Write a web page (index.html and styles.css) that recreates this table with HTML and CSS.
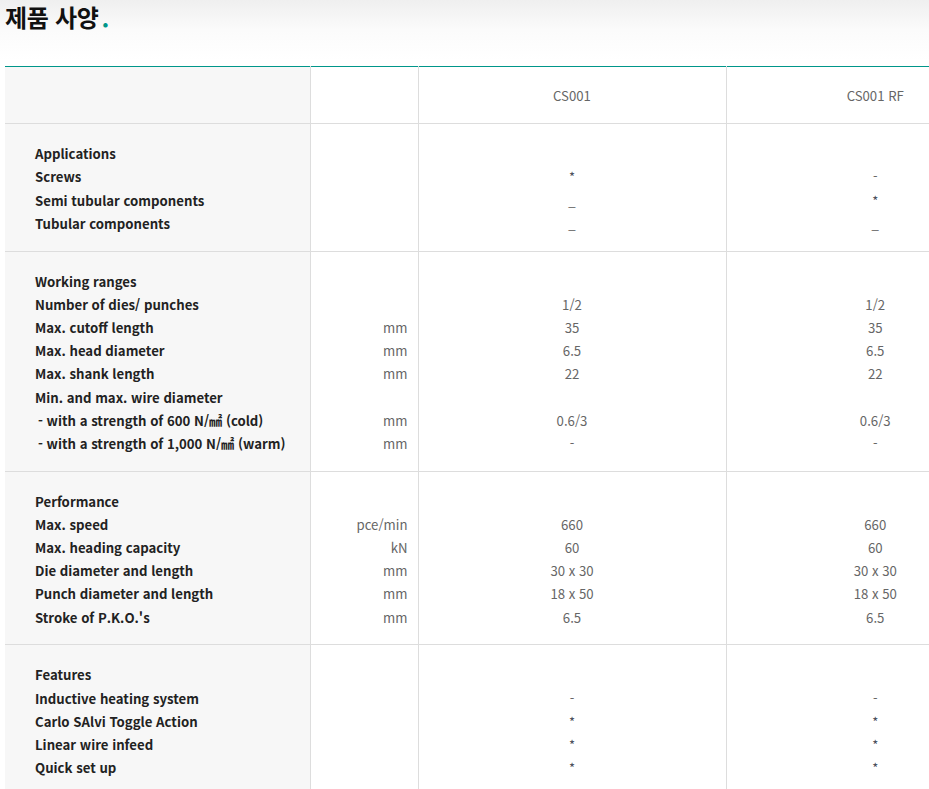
FILE: index.html
```html
<!DOCTYPE html>
<html lang="ko">
<head>
<meta charset="utf-8">
<title>제품 사양</title>
<link rel="stylesheet" href="styles.css">
</head>
<body>
<div class="page">
  <div class="title-bar">
    <h2 class="title">제품 사양<span class="dot">.</span></h2>
  </div>
  <div class="table-wrap">
    <table class="spec">
      <colgroup>
        <col class="c-label">
        <col class="c-unit">
        <col class="c-val">
        <col class="c-val2">
      </colgroup>
      <thead>
        <tr>
          <th class="label"></th>
          <th class="unit"></th>
          <th class="val">CS001</th>
          <th class="val">CS001 RF</th>
        </tr>
      </thead>
      <tbody>
        <tr>
          <td class="label">
            <div>Applications</div>
            <div>Screws</div>
            <div>Semi tubular components</div>
            <div>Tubular components</div>
          </td>
          <td class="unit">
            <div>&nbsp;</div><div>&nbsp;</div><div>&nbsp;</div><div>&nbsp;</div>
          </td>
          <td class="val">
            <div>&nbsp;</div>
            <div class="star">*</div>
            <div>_</div>
            <div>_</div>
          </td>
          <td class="val">
            <div>&nbsp;</div>
            <div>-</div>
            <div class="star">*</div>
            <div>_</div>
          </td>
        </tr>
        <tr>
          <td class="label">
            <div>Working ranges</div>
            <div>Number of dies/ punches</div>
            <div>Max. cutoff length</div>
            <div>Max. head diameter</div>
            <div>Max. shank length</div>
            <div>Min. and max. wire diameter</div>
            <div class="sub">- with a strength of 600 N/㎟ (cold)</div>
            <div class="sub">- with a strength of 1,000 N/㎟ (warm)</div>
          </td>
          <td class="unit">
            <div>&nbsp;</div>
            <div>&nbsp;</div>
            <div>mm</div>
            <div>mm</div>
            <div>mm</div>
            <div>&nbsp;</div>
            <div>mm</div>
            <div>mm</div>
          </td>
          <td class="val">
            <div>&nbsp;</div>
            <div>1/2</div>
            <div>35</div>
            <div>6.5</div>
            <div>22</div>
            <div>&nbsp;</div>
            <div>0.6/3</div>
            <div>-</div>
          </td>
          <td class="val">
            <div>&nbsp;</div>
            <div>1/2</div>
            <div>35</div>
            <div>6.5</div>
            <div>22</div>
            <div>&nbsp;</div>
            <div>0.6/3</div>
            <div>-</div>
          </td>
        </tr>
        <tr>
          <td class="label">
            <div>Performance</div>
            <div>Max. speed</div>
            <div>Max. heading capacity</div>
            <div>Die diameter and length</div>
            <div>Punch diameter and length</div>
            <div>Stroke of P.K.O.'s</div>
          </td>
          <td class="unit">
            <div>&nbsp;</div>
            <div>pce/min</div>
            <div>kN</div>
            <div>mm</div>
            <div>mm</div>
            <div>mm</div>
          </td>
          <td class="val">
            <div>&nbsp;</div>
            <div>660</div>
            <div>60</div>
            <div>30 x 30</div>
            <div>18 x 50</div>
            <div>6.5</div>
          </td>
          <td class="val">
            <div>&nbsp;</div>
            <div>660</div>
            <div>60</div>
            <div>30 x 30</div>
            <div>18 x 50</div>
            <div>6.5</div>
          </td>
        </tr>
        <tr>
          <td class="label">
            <div>Features</div>
            <div>Inductive heating system</div>
            <div>Carlo SAlvi Toggle Action</div>
            <div>Linear wire infeed</div>
            <div>Quick set up</div>
          </td>
          <td class="unit">
            <div>&nbsp;</div><div>&nbsp;</div><div>&nbsp;</div><div>&nbsp;</div><div>&nbsp;</div>
          </td>
          <td class="val">
            <div>&nbsp;</div>
            <div>-</div>
            <div class="star">*</div>
            <div class="star">*</div>
            <div class="star">*</div>
          </td>
          <td class="val">
            <div>&nbsp;</div>
            <div>-</div>
            <div class="star">*</div>
            <div class="star">*</div>
            <div class="star">*</div>
          </td>
        </tr>
      </tbody>
    </table>
  </div>
</div>
</body>
</html>
```

FILE: styles.css
```css
html, body {
  margin: 0;
  padding: 0;
  background: #fff;
}

body {
  font-family: "Noto Sans CJK KR", "Noto Sans", sans-serif;
  color: #222;
}

.page {
  width: 929px;
  overflow: hidden;
}

.title-bar {
  height: 66px;
  background: linear-gradient(#efefef 0px, #fbfbfb 30px, #ffffff 60px);
  padding: 0 0 0 5px;
  box-sizing: border-box;
}

.title {
  margin: 0;
  padding-top: 1px;
  font-size: 24px;
  line-height: 32px;
  font-weight: 700;
  color: #111;
  letter-spacing: -0.3px;
}

.title .dot {
  color: #00968a;
  margin-left: 3px;
}

.table-wrap {
  padding-left: 5px;
}

.spec {
  width: 1019px;
  table-layout: fixed;
  border-collapse: collapse;
  border-top: 1px solid #00968a;
  font-size: 13.2px;
  line-height: 23.2px;
}

.c-label { width: 305px; }
.c-unit { width: 108px; }
.c-val { width: 308px; }
.c-val2 { width: 298px; }

.spec th,
.spec td {
  padding: 18px 0 15.5px;
  vertical-align: top;
  border-bottom: 1px solid #dddddd;
  border-left: 1px solid #dddddd;
}

.spec th {
  padding: 17px 0 16px;
  font-weight: 400;
  color: #555;
}

.spec th:first-child,
.spec td:first-child {
  border-left: none;
}

.spec .label {
  background: #f7f7f7;
  padding-left: 30px;
  text-align: left;
  font-weight: 700;
  color: #222;
}

.spec .label .sub {
  padding-left: 3px;
}

.spec .unit {
  text-align: right;
  padding-right: 10px;
  color: #666;
}

.spec .val {
  text-align: center;
  color: #666;
}

.spec .val .star {
  font-size: 13px;
  color: #4a4f5a;
}
```
